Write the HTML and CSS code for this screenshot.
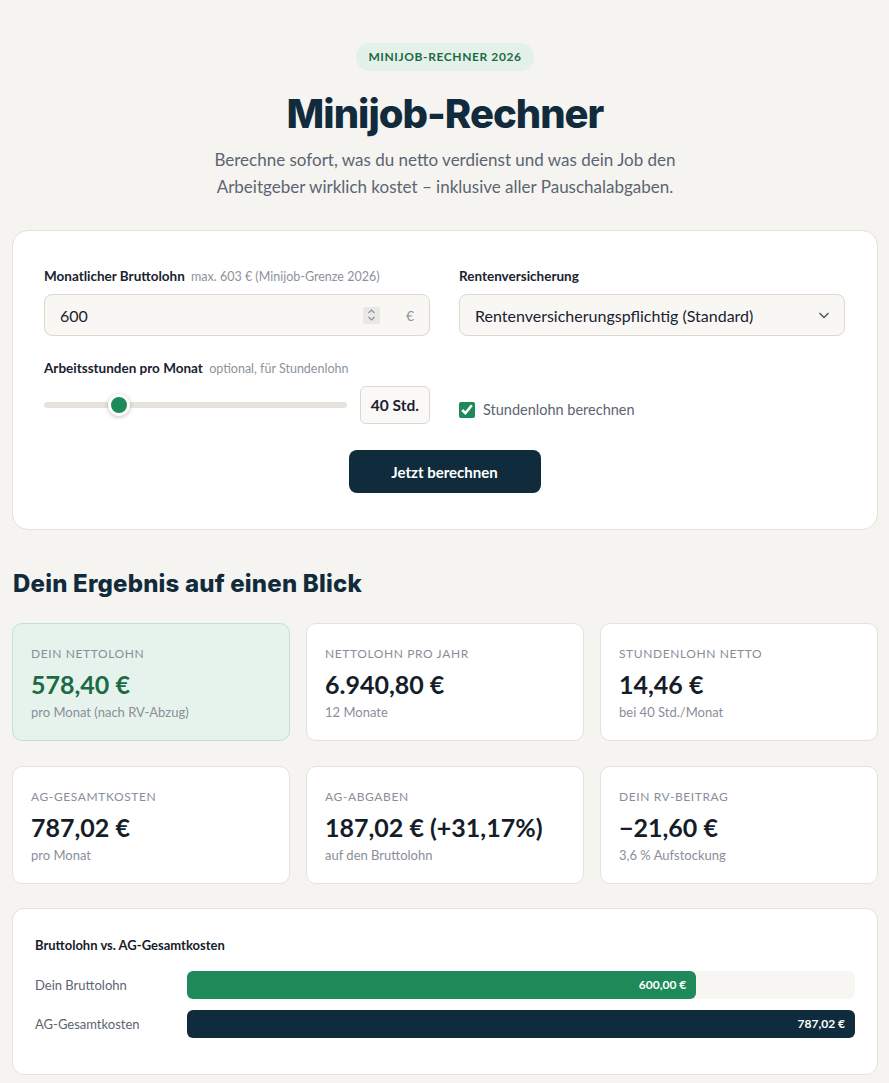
FILE: index.html
```html
<!DOCTYPE html>
<html lang="de">
<head>
    <meta charset="UTF-8">
    <meta name="viewport" content="width=device-width, initial-scale=1.0">
    <title>Minijob-Rechner 2026</title>
    <link rel="stylesheet" href="styles.css">
</head>
<body>

    <div class="page">
        <header class="hero">
            <span class="badge">MINIJOB-RECHNER 2026</span>
            <h1>Minijob-Rechner</h1>
            <p class="lead">Berechne sofort, was du netto verdienst und was dein Job den Arbeitgeber wirklich kostet – inklusive aller Pauschalabgaben.</p>
        </header>

        <!-- Eingabeformular -->
        <section class="card form-card">
            <div class="form-grid">
                <div class="field">
                    <label class="label" for="brutto">Monatlicher Bruttolohn <span class="hint">max. 603 € (Minijob-Grenze 2026)</span></label>
                    <div class="input-box">
                        <input type="text" id="brutto" value="600">
                        <span class="spin">
                            <svg width="9" height="14" viewBox="0 0 9 14"><path d="M1.5 5 4.5 2 7.5 5M1.5 9 4.5 12 7.5 9" fill="none" stroke="#8a8f99" stroke-width="1.1"/></svg>
                        </span>
                        <span class="unit">€</span>
                    </div>
                </div>

                <div class="field">
                    <label class="label" for="rv">Rentenversicherung</label>
                    <div class="select-box">
                        <select id="rv">
                            <option>Rentenversicherungspflichtig (Standard)</option>
                            <option>Befreit von der Rentenversicherung</option>
                        </select>
                        <svg class="chevron" width="14" height="14" viewBox="0 0 14 14"><path d="M2.5 5 7 9.5 11.5 5" fill="none" stroke="#4a5260" stroke-width="1.4"/></svg>
                    </div>
                </div>

                <div class="field">
                    <label class="label" for="hours">Arbeitsstunden pro Monat <span class="hint">optional, für Stundenlohn</span></label>
                    <div class="range-row">
                        <input type="range" id="hours" min="5" max="158" value="40" oninput="updateHours()">
                        <span class="range-value" id="hoursValue">40 Std.</span>
                    </div>
                </div>

                <div class="field check-field">
                    <label class="check">
                        <input type="checkbox" id="withHourly" checked>
                        Stundenlohn berechnen
                    </label>
                </div>
            </div>

            <div class="actions">
                <button class="btn" type="button">Jetzt berechnen</button>
            </div>
        </section>

        <!-- Ergebnisse -->
        <h2 class="section-title">Dein Ergebnis auf einen Blick</h2>

        <div class="results">
            <div class="stat stat-main">
                <div class="stat-label">Dein Nettolohn</div>
                <div class="stat-value">578,40 €</div>
                <div class="stat-note">pro Monat (nach RV-Abzug)</div>
            </div>
            <div class="stat">
                <div class="stat-label">Nettolohn pro Jahr</div>
                <div class="stat-value">6.940,80 €</div>
                <div class="stat-note">12 Monate</div>
            </div>
            <div class="stat">
                <div class="stat-label">Stundenlohn netto</div>
                <div class="stat-value">14,46 €</div>
                <div class="stat-note">bei 40 Std./Monat</div>
            </div>
            <div class="stat">
                <div class="stat-label">AG-Gesamtkosten</div>
                <div class="stat-value">787,02 €</div>
                <div class="stat-note">pro Monat</div>
            </div>
            <div class="stat">
                <div class="stat-label">AG-Abgaben</div>
                <div class="stat-value">187,02 € (+31,17%)</div>
                <div class="stat-note">auf den Bruttolohn</div>
            </div>
            <div class="stat">
                <div class="stat-label">Dein RV-Beitrag</div>
                <div class="stat-value">−21,60 €</div>
                <div class="stat-note">3,6 % Aufstockung</div>
            </div>
        </div>

        <!-- Vergleich Brutto / Arbeitgeberkosten -->
        <section class="card chart-card">
            <h3 class="chart-title">Bruttolohn vs. AG-Gesamtkosten</h3>
            <div class="bar-row">
                <span class="bar-label">Dein Bruttolohn</span>
                <div class="bar-track">
                    <div class="bar bar-green" style="width: 76.24%">600,00 €</div>
                </div>
            </div>
            <div class="bar-row">
                <span class="bar-label">AG-Gesamtkosten</span>
                <div class="bar-track">
                    <div class="bar bar-navy" style="width: 100%">787,02 €</div>
                </div>
            </div>
        </section>
    </div>

    <script>
        // Anzeige neben dem Schieberegler aktualisieren
        function updateHours() {
            const hours = document.getElementById('hours').value;
            document.getElementById('hoursValue').textContent = hours + ' Std.';
        }
    </script>
</body>
</html>
```

FILE: styles.css
```css
/* Grundlayout */
body {
    margin: 0;
    background: #f5f4f0;
    font-family: 'Lato', 'Noto Sans', sans-serif;
    color: #13283a;
}

.page {
    padding: 43px 11px 24px 12px;
}

/* Kopfbereich */
.hero {
    display: flex;
    flex-direction: column;
    align-items: center;
    text-align: center;
}

.badge {
    background: #e4f1e9;
    color: #1c6a45;
    font-size: 12px;
    font-weight: 700;
    letter-spacing: 0.6px;
    padding: 0 12px;
    height: 28px;
    line-height: 28px;
    border-radius: 14px;
}

h1 {
    font-family: 'Inter', sans-serif;
    font-size: 40px;
    font-weight: 800;
    letter-spacing: -1px;
    color: #112b3c;
    margin: 19px 0 8px;
    line-height: 48px;
}

.lead {
    max-width: 480px;
    margin: 0 0 30px;
    font-size: 17px;
    line-height: 27px;
    color: #5c6472;
}

/* Karten */
.card {
    background: #fff;
    border: 1px solid #e5e2da;
    border-radius: 16px;
}

.form-card {
    padding: 37px 32px 36px 31px;
}

.form-grid {
    display: grid;
    grid-template-columns: 1fr 1fr;
    column-gap: 29px;
    row-gap: 24px;
}

.label {
    display: block;
    font-size: 13.5px;
    font-weight: 700;
    color: #1a2230;
    margin-bottom: 10px;
}

.hint {
    font-weight: 400;
    font-size: 12.5px;
    color: #8d929c;
    margin-left: 3px;
}

.input-box {
    display: flex;
    align-items: center;
    height: 40px;
    background: #f8f7f4;
    border: 1px solid #dcd8d0;
    border-radius: 8px;
    padding: 0 15px;
}

.input-box input {
    flex: 1;
    min-width: 0;
    border: none;
    background: transparent;
    font-family: inherit;
    font-size: 16px;
    color: #1a2230;
    outline: none;
    padding: 0;
}

.spin {
    display: flex;
    align-items: center;
    justify-content: center;
    width: 17px;
    height: 17px;
    background: #e9e8e6;
    border-radius: 2px;
    margin-right: 26px;
}

.unit {
    color: #8d929c;
    font-size: 14px;
}

.select-box {
    position: relative;
}

.select-box select {
    width: 100%;
    height: 42px;
    appearance: none;
    background: #f8f7f4;
    border: 1px solid #dcd8d0;
    border-radius: 8px;
    padding: 0 15px;
    font-family: inherit;
    font-size: 16px;
    color: #1a2230;
}

.chevron {
    position: absolute;
    right: 14px;
    top: 14px;
    pointer-events: none;
}

/* Schieberegler */
.range-row {
    display: flex;
    align-items: center;
    gap: 13px;
}

.range-row input[type=range] {
    flex: 1;
    appearance: none;
    height: 6px;
    margin: 0;
    background: #e6e3dd;
    border-radius: 3px;
}

.range-row input[type=range]::-webkit-slider-thumb {
    appearance: none;
    width: 22px;
    height: 22px;
    border-radius: 50%;
    background: #1e8a5a;
    border: 3px solid #fff;
    box-shadow: 0 1px 4px rgba(0, 0, 0, 0.25);
}

.range-value {
    border: 1px solid #dcd8d0;
    background: #faf9f7;
    border-radius: 6px;
    height: 36px;
    line-height: 36px;
    padding: 0 10px;
    font-size: 15.5px;
    font-weight: 700;
    color: #1a2230;
}

.check-field {
    display: flex;
    align-items: flex-end;
    padding-bottom: 6px;
}

.check {
    display: flex;
    align-items: center;
    gap: 8px;
    font-size: 14.5px;
    color: #5c6472;
}

.check input {
    width: 16px;
    height: 16px;
    margin: 0;
    accent-color: #1e8a5a;
}

.actions {
    display: flex;
    justify-content: center;
    margin-top: 26px;
}

.btn {
    width: 192px;
    height: 43px;
    border: none;
    border-radius: 8px;
    background: #0f2b3c;
    color: #fff;
    font-family: inherit;
    font-size: 15px;
    font-weight: 700;
}

/* Ergebnisse */
.section-title {
    font-family: 'Inter', sans-serif;
    font-size: 24px;
    font-weight: 800;
    letter-spacing: 0.2px;
    color: #112b3c;
    margin: 39px 0 25px 1px;
}

.results {
    display: grid;
    grid-template-columns: repeat(3, 1fr);
    column-gap: 16px;
    row-gap: 25px;
}

.stat {
    background: #fff;
    border: 1px solid #e5e2da;
    border-radius: 10px;
    padding: 22px 18px 22px;
    height: 72px;
}

.stat-main {
    background: #e6f3ec;
    border-color: #c2e1cf;
}

.stat-label {
    font-size: 12px;
    letter-spacing: 0.6px;
    text-transform: uppercase;
    color: #8a8e99;
}

.stat-value {
    font-size: 25px;
    font-weight: 700;
    color: #151d29;
    margin-top: 8px;
    line-height: 30px;
}

.stat-main .stat-value {
    color: #1b6b45;
}

.stat-note {
    font-size: 13px;
    color: #8a8e99;
    margin-top: 5px;
}

/* Balkendiagramm */
.chart-card {
    margin-top: 24px;
    padding: 28px 22px 36px;
    border-radius: 12px;
}

.chart-title {
    margin: 0 0 18px;
    font-size: 13px;
    font-weight: 700;
    color: #151d29;
}

.bar-row {
    display: flex;
    align-items: center;
    margin-top: 11px;
}

.bar-label {
    width: 152px;
    font-size: 13px;
    color: #5c6472;
}

.bar-track {
    flex: 1;
    height: 28px;
    background: #f7f6f3;
    border-radius: 6px;
}

.bar {
    height: 28px;
    line-height: 28px;
    border-radius: 6px;
    text-align: right;
    padding-right: 10px;
    box-sizing: border-box;
    color: #fff;
    font-size: 12px;
    font-weight: 700;
}

.bar-green {
    background: #1e8a5a;
}

.bar-navy {
    background: #0f2b3c;
}
```
